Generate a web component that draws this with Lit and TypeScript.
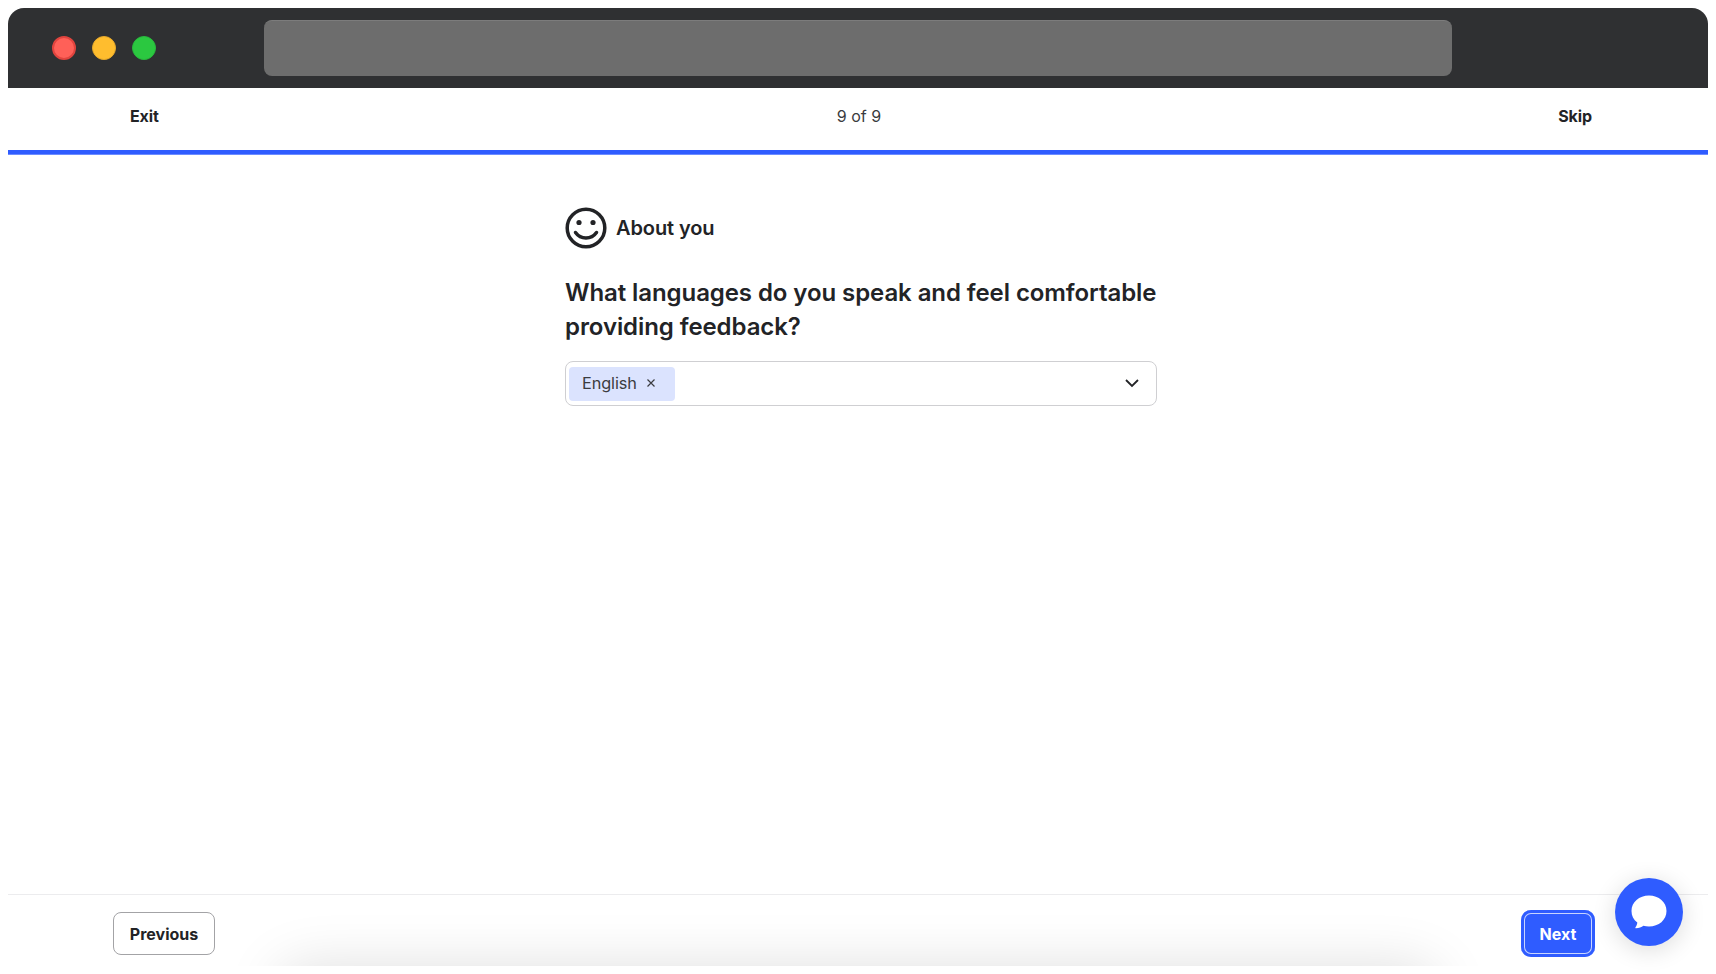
import { LitElement, html, css } from "lit";
import { customElement } from "lit/decorators.js";

@customElement("app-root")
export class AppRoot extends LitElement {
  static styles = css`
    :host { display: block; font-family: "Inter", "Noto Sans", sans-serif; color: #222326; background: #fff; }
    .page { height: 974px; box-sizing: border-box; padding: 8px 8px; display: flex; flex-direction: column; overflow: hidden; position: relative; }
    .win { flex: 1; display: flex; flex-direction: column; position: relative; overflow: hidden; background: #fff; }
    .titlebar { height: 80px; flex: none; background: #2f3032; border-radius: 16px 16px 0 0; display: flex; align-items: center; padding-left: 44px; }
    .dot { width: 24px; height: 24px; border-radius: 50%; box-sizing: border-box; margin-right: 16px; }
    .red { background: #ff6058; border: 2px solid #e0443e; }
    .yellow { background: #ffbd2e; border: 1px solid #e6a82a; }
    .green { background: #2bc840; border: 1px solid #28b83c; }
    .address { margin-left: 92px; width: 1188px; height: 56px; box-sizing: border-box; border-radius: 8px; background: #6d6d6d; border-top: 1px solid #7c7c7c; }
    .nav { height: 62px; flex: none; display: grid; grid-template-columns: 1fr auto 1fr; align-items: center; padding: 0 116px 6px 122px; box-sizing: border-box; font-size: 16px; }
    .nav b { font-weight: 700; letter-spacing: -0.1px; }
    .nav .count { font-weight: 400; color: #3a3b3e; margin-right: 4px; }
    .nav .skip { justify-self: end; }
    .progress { height: 5px; flex: none; background: linear-gradient(#2f5cff 80%, #6d8cff 80%); }
    .main { flex: 1; display: flex; flex-direction: column; padding: 52px 0 0 557px; }
    .section { display: flex; align-items: center; gap: 9px; height: 41px; font-size: 20px; font-weight: 600; letter-spacing: -0.1px; }
    .question { margin: 28px 0 0; width: 610px; font-size: 24px; font-weight: 600; line-height: 34px; letter-spacing: -0.08px; color: #222326; }
    .select { margin-top: 17px; width: 592px; height: 45px; box-sizing: border-box; border: 1px solid #cfcfd2; border-radius: 8px; display: flex; align-items: center; justify-content: space-between; padding: 0 16px 0 3px; }
    .chevron { margin-bottom: 2px; }
    .chip { width: 106px; height: 34px; box-sizing: border-box; background: #dbe3fe; border-radius: 4px; display: flex; align-items: center; padding: 0 0 2px 13px; gap: 9px; font-size: 16.300px; color: #3b3c40; letter-spacing: -0.1px; }
    .footer { height: 72px; flex: none; box-sizing: border-box; border-top: 1px solid #ececee; display: flex; align-items: center; justify-content: space-between; padding: 6px 113px 0 105px; position: relative; }
    .btn { font: inherit; font-size: 16px; font-weight: 700; letter-spacing: 0; box-sizing: border-box; position: relative; }
    .prev { width: 102px; height: 43px; background: #fff; border: 1px solid #a3a3a6; border-radius: 8px; color: #222326; }
    .next { width: 74px; height: 47px; background: #2f5cff; color: #fff; border: none; border-radius: 10px; box-shadow: inset 0 0 0 3px #2f5cff, inset 0 0 0 4px #c8d4ff; }
    .glow { position: absolute; left: 268px; right: 268px; bottom: -60px; height: 60px; box-shadow: 0 0 56px rgba(0,0,0,.13); border-radius: 30px; }
    .chat { position: absolute; left: 1615px; top: 878px; width: 68px; height: 68px; border-radius: 50%; background: #2f5cff; display: flex; align-items: center; justify-content: center; box-shadow: 0 4px 24px rgba(0,0,0,.14); }
  `;

  render() {
    return html`<div class="page"><div class="win">
      <div class="titlebar">
        <span class="dot red"></span><span class="dot yellow"></span><span class="dot green"></span>
        <div class="address"></div>
      </div>
      <div class="nav"><b>Exit</b><span class="count">9 of 9</span><b class="skip">Skip</b></div>
      <div class="progress"></div>
      <div class="main">
        <div class="section">
          <svg width="42" height="42" viewBox="0 0 42 42" fill="none" stroke="#222326" stroke-width="3.500">
            <circle cx="21" cy="21" r="18.800"/>
            <circle cx="14" cy="15.500" r="2.600" fill="#222326" stroke="none"/>
            <circle cx="28" cy="15.500" r="2.600" fill="#222326" stroke="none"/>
            <path d="M10.500 25.500c2.500 3.500 6 5.500 10.500 5.500s8-2 10.500-5.500" stroke-linecap="round"/>
          </svg>
          <span>About you</span>
        </div>
        <h1 class="question">What languages do you speak and feel comfortable<br>providing feedback?</h1>
        <div class="select">
          <div class="chip"><span>English</span>
            <svg width="10" height="10" viewBox="0 0 10 10" stroke="#3b3c40" stroke-width="1.2"><path d="M1.500 1.500l7 7M8.500 1.500l-7 7"/></svg>
          </div>
          <svg class="chevron" width="16" height="10" viewBox="0 0 16 10" fill="none" stroke="#222326" stroke-width="1.800"><path d="M2 2l6 6 6-6"/></svg>
        </div>
      </div>
      <div class="footer">
        <div class="glow"></div>
        <button class="btn prev">Previous</button>
        <button class="btn next">Next</button>
      </div>
    </div>
    <div class="chat">
      <svg width="38" height="38" viewBox="0 0 38 38"><path fill="#fff" d="M19 2.500c9.800 0 17.500 6.500 17.500 15.500S28.800 33.500 19 33.500c-2 0-3.900-.3-5.600-.8-1.800 1.400-4.500 2.500-7.400 2.600-.6 0-.9-.6-.5-1.100 1-1.200 1.700-2.800 1.800-4.700C3.500 27 1.500 22.800 1.500 18 1.500 9 9.200 2.500 19 2.500z"/></svg>
    </div>
    </div>`;
  }
}
